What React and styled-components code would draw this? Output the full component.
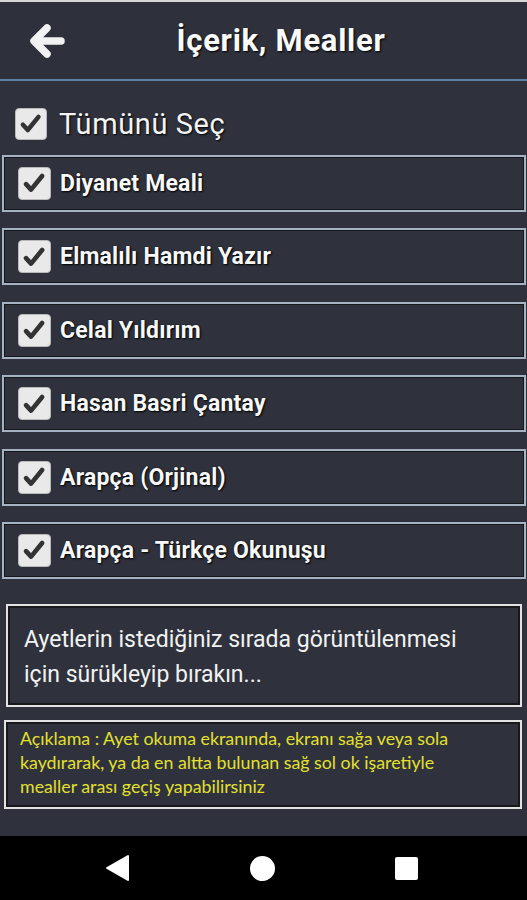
import React from 'react';
import styled, { createGlobalStyle } from 'styled-components';

const GlobalStyle = createGlobalStyle`
    body {
        margin: 0;
        background: #2f323c;
        font-family: Roboto, "Liberation Sans", sans-serif;
    }
`;

const mealler = [
    'Diyanet Meali',
    'Elmalılı Hamdi Yazır',
    'Celal Yıldırım',
    'Hasan Basri Çantay',
    'Arapça (Orjinal)',
    'Arapça - Türkçe Okunuşu'
];

function Check({ size }) {
    return (
        <Box size={size}>
            <svg width="78%" height="78%" viewBox="0 0 24 24">
                <path d="M4 13 L9 18.5 L20 5" fill="none" stroke="#333" strokeWidth="4.6" strokeLinecap="round" strokeLinejoin="round" />
            </svg>
        </Box>
    );
}

export default function App() {
    return (
        <Screen>
            <GlobalStyle />
            <StatusLine />
            <Header>
                <Back>
                    <svg width="38" height="38" viewBox="0 0 38 38">
                        <path d="M33 19 H7 M19 6 L6 19 L19 32" fill="none" stroke="#f2f2f2" strokeWidth="7.5" strokeLinecap="round" strokeLinejoin="round" />
                    </svg>
                </Back>
                <Title>İçerik, Mealler</Title>
            </Header>

            <SelectAll>
                <Check size={32} />
                <SelectAllLabel>Tümünü Seç</SelectAllLabel>
            </SelectAll>

            <List>
                {mealler.map((m) => (
                    <Row key={m}>
                        <Check size={33} />
                        <RowLabel>{m}</RowLabel>
                    </Row>
                ))}
            </List>

            <InfoBox>
                Ayetlerin istediğiniz sırada görüntülenmesi için sürükleyip bırakın...
            </InfoBox>

            <NoteBox>
                Açıklama : Ayet okuma ekranında, ekranı sağa veya sola kaydırarak, ya da en altta bulunan sağ sol ok işaretiyle mealler arası geçiş yapabilirsiniz
            </NoteBox>

            <Spacer />

            <NavBar>
                <svg width="26" height="28" viewBox="0 0 26 28">
                    <path d="M24 2 L24 26 L3 14 Z" fill="#fff" stroke="#fff" strokeWidth="2" strokeLinejoin="round" />
                </svg>
                <Circle />
                <Square />
            </NavBar>
        </Screen>
    );
}

const Screen = styled.div`
    width: 527px;
    height: 900px;
    display: flex;
    flex-direction: column;
    background: #2f323c;
    overflow: hidden;
`;

const StatusLine = styled.div`
    height: 2px;
    background: #d6d6d6;
`;

const Header = styled.div`
    height: 77px;
    display: flex;
    align-items: center;
    border-bottom: 2px solid #5b83a6;
    background: #2e313b;
`;

const Back = styled.div`
    width: 95px;
    display: flex;
    justify-content: flex-start;
    padding-left: 28px;
    box-sizing: border-box;
`;

const Title = styled.div`
    flex: 1;
    padding-right: 60px;
    text-align: center;
    color: #fafafa;
    font-size: 31px;
    font-weight: 700;
    letter-spacing: 0.7px;
    text-shadow: 1px 1px 2px #000;
`;

const Box = styled.div`
    width: ${(p) => p.size}px;
    height: ${(p) => p.size}px;
    box-sizing: border-box;
    border-radius: 4px;
    background: #e9e9e9;
    border: 1px solid #b9b9b9;
    display: flex;
    align-items: center;
    justify-content: center;
    flex-shrink: 0;
`;

const SelectAll = styled.div`
    height: 74px;
    display: flex;
    align-items: center;
    gap: 12px;
    padding: 12px 0 0 15px;
    box-sizing: border-box;
`;

const SelectAllLabel = styled.div`
    color: #f4f4f4;
    font-size: 29px;
    letter-spacing: 0.6px;
    text-shadow: 1px 1px 2px #000;
`;

const List = styled.div`
    display: flex;
    flex-direction: column;
    gap: 16.4px;
    margin: 0 1px 0 2px;
`;

const Row = styled.div`
    height: 57px;
    box-sizing: border-box;
    display: flex;
    align-items: center;
    gap: 9px;
    padding-left: 14px;
    border: 2px solid #a3b3c2;
    box-shadow: inset 0 0 0 1px #15171b;
`;

const RowLabel = styled.div`
    color: #f8f8f8;
    font-size: 23px;
    font-weight: 700;
    letter-spacing: 0.2px;
    text-shadow: 1px 1px 2px #000, 0 0 1px #000;
`;

const InfoBox = styled.div`
    margin: 25px 5px 0 6px;
    height: 103px;
    box-sizing: border-box;
    border: 2px solid #e2e2e2;
    box-shadow: inset 0 0 0 2px #17191d;
    padding: 16px 40px 0 16px;
    color: #f2f2f2;
    font-size: 23px;
    line-height: 35px;
`;

const NoteBox = styled.div`
    margin: 13px 5px 0 4px;
    height: 89px;
    box-sizing: border-box;
    border: 2px solid #e2e2e2;
    box-shadow: inset 0 0 0 2px #17191d;
    padding: 4px 60px 0 14px;
    color: #e4e02e;
    font-family: Lato, "Open Sans", sans-serif;
    font-size: 17.8px;
    line-height: 24px;
`;

const Spacer = styled.div`
    flex: 1;
`;

const NavBar = styled.div`
    height: 64px;
    background: #000;
    display: flex;
    align-items: center;
    gap: 120px;
    padding-left: 104px;
`;

const Circle = styled.div`
    width: 25px;
    height: 25px;
    border-radius: 50%;
    background: #fff;
`;

const Square = styled.div`
    width: 23px;
    height: 23px;
    border-radius: 2px;
    background: #fff;
`;
